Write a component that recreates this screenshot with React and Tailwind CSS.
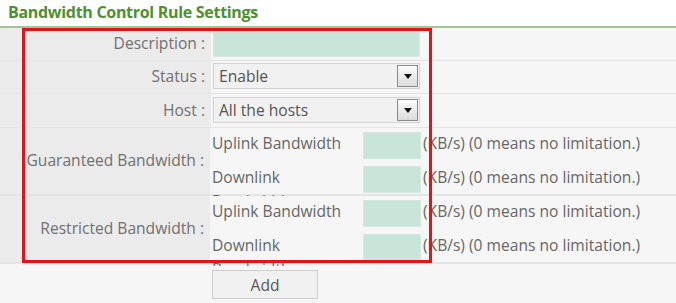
export default function App() {
  const font = { fontFamily: '"Open Sans", "Liberation Sans", sans-serif' };

  const BwRow = ({ label }) => (
    <div className="flex h-[68px] border-b-2 border-[#e4e4e4]">
      <div className="w-[211px] shrink-0 bg-[#ebebeb] border-r border-[#f6f6f6] flex items-center justify-end pr-[6px] text-[#707070]">
        {label}
      </div>
      <div className="flex-1 bg-[#f6f6f6] pl-[1px]">
        {["Uplink Bandwidth", "Downlink Bandwidth"].map((t) => (
          <div key={t} className="flex items-start h-[34px]">
            <div className="w-[151px] h-[36px] overflow-hidden pt-[3px] leading-[24px] text-[#666]">
              <div className="w-[135px]">{t}</div>
            </div>
            <div className="mt-[4px] w-[58px] h-[27px] bg-[#c9e5d9] border border-[#d6e8df]" />
            <div className="pt-[3px] leading-[24px] pl-[2px] text-[#666] whitespace-nowrap">
              (KB/s) (0 means no limitation.)
            </div>
          </div>
        ))}
      </div>
    </div>
  );

  const Select = ({ value }) => (
    <div className="w-[207px] h-[26px] bg-[#f1f1f1] border border-[#d3d3d3] flex items-center justify-between pl-[5px] pr-[1px] text-[#555]">
      <span className="leading-[22px]">{value}</span>
      <div className="w-[21px] h-[22px] border border-[#8a8a8a] bg-gradient-to-b from-[#fbfbfb] to-[#dcdcdc] flex items-center justify-center">
        <svg width="8" height="5" viewBox="0 0 8 5">
          <path d="M0 0 H8 L4 5 Z" fill="#111" />
        </svg>
      </div>
    </div>
  );

  return (
    <div className="relative w-[676px] h-[303px] bg-white overflow-hidden text-[15.6px]" style={font}>
      <div className="h-[26px] pl-[8px] text-[16px] font-bold text-[#4e8f30] leading-[24px] tracking-[-0.3px]">
        Bandwidth Control Rule Settings
      </div>
      <div className="h-[2px] bg-[#a3c494]" />

      <div className="flex h-[33px] border-b border-[#e4e4e4]">
        <div className="w-[211px] shrink-0 bg-[#ebebeb] flex items-center justify-end pr-[6px] text-[#707070]">
          Description :
        </div>
        <div className="flex-1 bg-[#f6f6f6] pl-[2px] pt-[3px]">
          <div className="w-[207px] h-[26px] bg-[#c9e5d9] border border-[#d6e8df]" />
        </div>
      </div>

      <div className="flex h-[33px] border-b border-[#e4e4e4]">
        <div className="w-[211px] shrink-0 bg-[#ebebeb] flex items-center justify-end pr-[6px] text-[#707070]">
          Status :
        </div>
        <div className="flex-1 bg-[#f6f6f6] pl-[2px] pt-[2px]">
          <Select value="Enable" />
        </div>
      </div>

      <div className="flex h-[34px] border-b border-[#e4e4e4]">
        <div className="w-[211px] shrink-0 bg-[#ebebeb] flex items-center justify-end pr-[6px] text-[#707070]">
          Host :
        </div>
        <div className="flex-1 bg-[#f6f6f6] pl-[2px] pt-[3px]">
          <Select value="All the hosts" />
        </div>
      </div>

      <BwRow label="Guaranteed Bandwidth :" />
      <BwRow label="Restricted Bandwidth :" />

      <div className="h-[40px] bg-[#f6f6f6] pl-[212px] pt-[6px]">
        <button className="w-[106px] h-[29px] bg-[#f1f1f1] border border-[#cfcfcf] text-[#555] leading-[22px]">
          Add
        </button>
      </div>

      <div className="absolute left-[22px] top-[28px] w-[410px] h-[235px] border-[3px] border-[#e2141b] pointer-events-none" />
    </div>
  );
}
